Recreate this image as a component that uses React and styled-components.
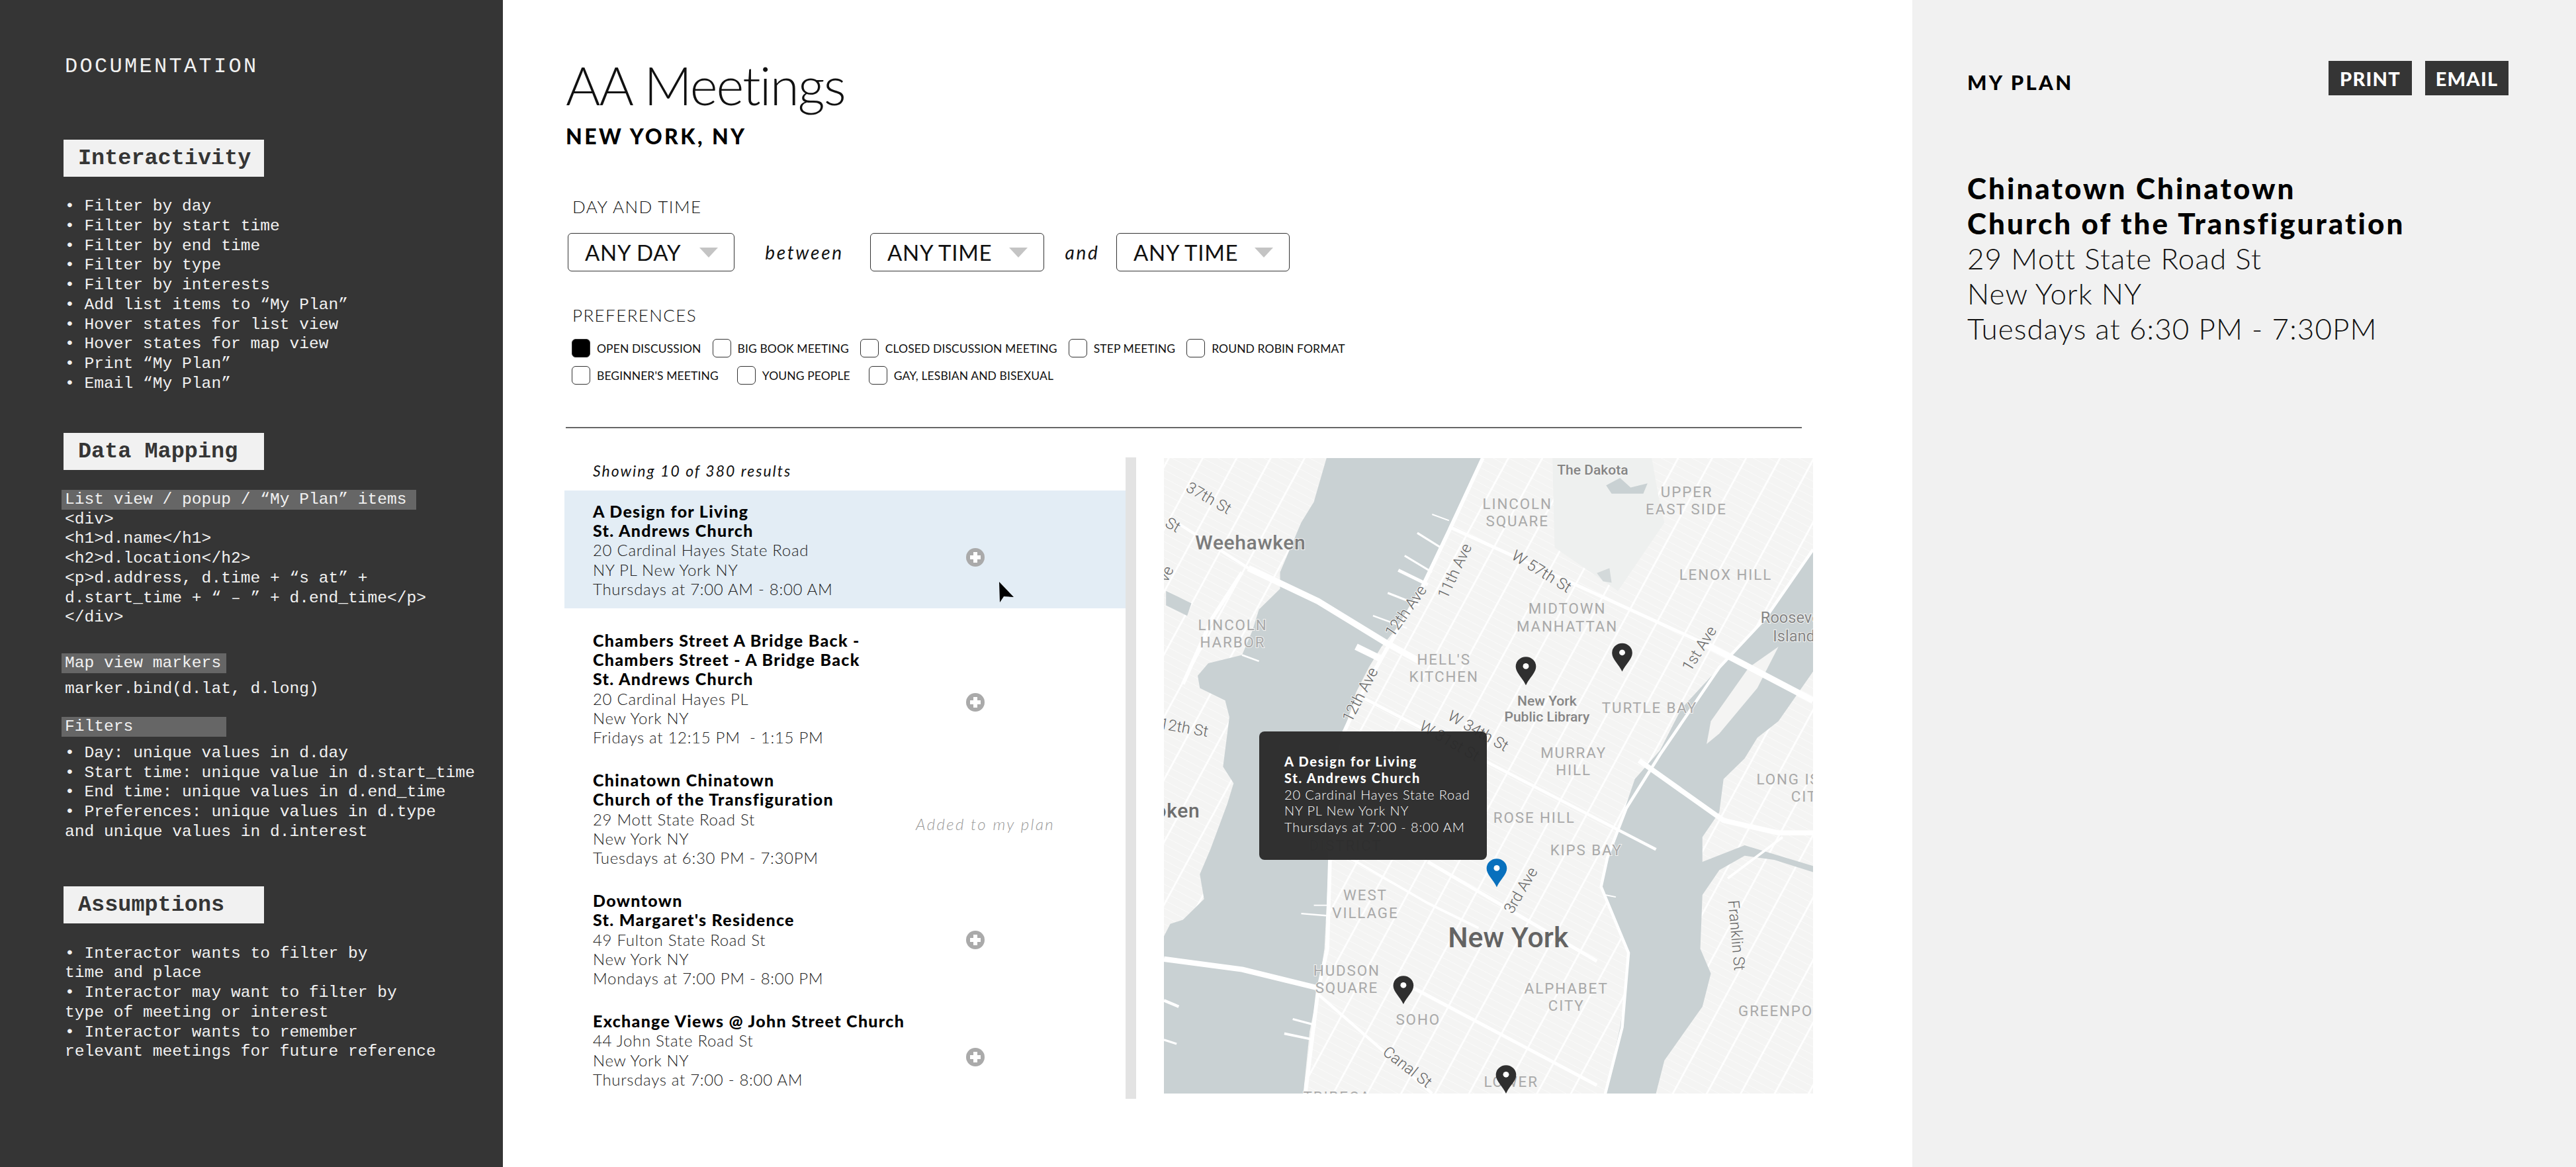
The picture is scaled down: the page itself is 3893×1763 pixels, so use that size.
import React from 'react';
import styled, { createGlobalStyle } from 'styled-components';

const INK = '#353535';
const PAPER = '#f1f1f1';
const MONO = '"Liberation Mono", "DejaVu Sans Mono", monospace';
const SANS = 'Lato, "Open Sans", sans-serif';
const MAP_FONT = 'Roboto, "Noto Sans", sans-serif';

const GlobalStyle = createGlobalStyle`
  html, body { margin: 0; padding: 0; background: #fff; }
  * { box-sizing: border-box; }
  body { font-family: ${SANS}; overflow: hidden; }
`;

const Page = styled.div`
  display: grid;
  grid-template-columns: 760px 2130px 1003px;
  width: 3893px;
  height: 1763px;
  overflow: hidden;
`;

/* ---------- documentation column ---------- */

const Docs = styled.aside`
  background: ${INK};
  color: ${PAPER};
  padding: 80px 0 0 96px;
  font-family: ${MONO};
`;

const DocsTitle = styled.div`
  height: 40px;
  line-height: 42px;
  padding-left: 2px;
  font-size: 32px;
  letter-spacing: 3.3px;
`;

const DocsHeading = styled.h2`
  width: 303px;
  height: 56px;
  margin: ${p => p.$top}px 0 0;
  padding-left: 22px;
  background: ${PAPER};
  color: ${INK};
  font-size: 33.5px;
  line-height: 56px;
  font-weight: 700;
`;

const Lines = styled.div`
  margin-top: ${p => p.$top}px;
  padding-left: 2px;
  font-size: 24.6px;
  line-height: 29.75px;
  white-space: pre;
`;

const CodeTag = styled.div`
  width: ${p => p.$width}px;
  height: 30px;
  margin: ${p => p.$top}px 0 0 -3px;
  padding-left: 5px;
  background: #666;
  font-size: 24.6px;
  line-height: 30px;
  white-space: pre;
`;

/* ---------- main column ---------- */

const Main = styled.main`
  padding: 88px 0 0 95px;
`;

const Title = styled.h1`
  margin: 0;
  font-size: 80px;
  line-height: 80px;
  font-weight: 300;
  color: #111;
  letter-spacing: -1.9px;
`;

const City = styled.div`
  margin-top: 18px;
  font-size: 32px;
  line-height: 40px;
  font-weight: 900;
  color: #000;
  letter-spacing: 3.4px;
`;

const FilterLabel = styled.div`
  margin: ${p => p.$top}px 0 0 10px;
  font-size: 26px;
  line-height: 32px;
  font-weight: 300;
  color: #111;
  letter-spacing: 1.4px;
`;

const SelectRow = styled.div`
  display: flex;
  align-items: center;
  margin: 24px 0 0 3px;
`;

const Select = styled.div`
  display: flex;
  align-items: center;
  justify-content: space-between;
  width: ${p => p.$width}px;
  height: 58px;
  padding: 0 24px 0 25px;
  border: 1.5px solid #333;
  border-radius: 6px;
  font-size: 33px;
  color: #111;
  letter-spacing: 0.7px;
`;

const Caret = styled.span`
  width: 0;
  height: 0;
  border-left: 14px solid transparent;
  border-right: 14px solid transparent;
  border-top: 15px solid #c4c4c4;
`;

const Joiner = styled.span`
  width: ${p => p.$width}px;
  padding-left: 6px;
  text-align: center;
  font-size: 28px;
  font-style: italic;
  color: #111;
  letter-spacing: 2.7px;
`;

const PrefRow = styled.div`
  display: flex;
  align-items: center;
  gap: ${p => p.$gap}px;
  margin: ${p => p.$top}px 0 0 9px;
`;

const Pref = styled.label`
  display: flex;
  align-items: center;
  gap: 10px;
  font-size: 17.5px;
  letter-spacing: 0.1px;
  color: #111;
`;

const Box = styled.span`
  width: 28px;
  height: 28px;
  border: 1.5px solid #333;
  border-radius: 6px;
  background: ${p => (p.$on ? '#000' : 'transparent')};
`;

const Rule = styled.hr`
  width: 1868px;
  height: 2px;
  margin: 64px 0 0;
  border: 0;
  background: #666;
`;

const Results = styled.section`
  display: flex;
  align-items: flex-start;
  margin: 44px 0 0 -2px;
`;

const ListColumn = styled.div`
  width: 848px;
`;

const Track = styled.div`
  width: 16px;
  height: 969px;
  background: #e3e3e3;
`;

const Count = styled.div`
  height: 50px;
  padding-left: 43px;
  font-size: 23px;
  line-height: 40px;
  font-style: italic;
  color: #111;
  letter-spacing: 2px;
`;

const Row = styled.article`
  position: relative;
  display: grid;
  grid-template-columns: 488px 1fr;
  padding: ${p => (p.$hot ? '17px 0 15px 43px' : '18px 0 18px 43px')};
  margin-bottom: ${p => (p.$hot ? 16 : 0)}px;
  background: ${p => (p.$hot ? '#e3edf5' : 'transparent')};
`;

const RowName = styled.div`
  font-size: 25px;
  line-height: 29.2px;
  font-weight: 900;
  color: #000;
  letter-spacing: 1.3px;
`;

const RowText = styled.div`
  font-size: 24px;
  line-height: 29.2px;
  font-weight: 300;
  color: #222;
  white-space: pre;
  letter-spacing: 0.7px;
`;

const AddButton = styled.button`
  width: 28px;
  height: 28px;
  margin: ${p => p.$top}px 0 0 76px;
  padding: 0;
  border: 0;
  border-radius: 50%;
  background: #aaa;
  display: flex;
  align-items: center;
  justify-content: center;
`;

const AddedNote = styled.div`
  margin-top: ${p => p.$top}px;
  font-size: 24px;
  line-height: 29px;
  font-weight: 300;
  font-style: italic;
  color: #999;
  letter-spacing: 2.4px;
`;

const Cursor = styled.svg`
  position: absolute;
  left: 657px;
  top: 138px;
`;

const MapBox = styled.div`
  position: relative;
  width: 981px;
  height: 960px;
  margin: 1px 0 0 42px;
  overflow: hidden;
  background: #f4f4f3;
`;

const MapSvg = styled.svg`
  display: block;
  width: 100%;
  height: 100%;
`;

const MapText = styled.text`
  font-family: ${MAP_FONT};
  font-size: ${p => p.$size}px;
  font-weight: ${p => p.$weight || 400};
  fill: ${p => p.$fill || '#a9a9a9'};
  letter-spacing: ${p => p.$spacing || 0}px;
  stroke: #f4f4f3;
  stroke-width: 3px;
  paint-order: stroke;
  text-anchor: ${p => p.$anchor || 'middle'};
  dominant-baseline: middle;
`;

const Popup = styled.div`
  position: absolute;
  left: 144px;
  top: 413px;
  width: 344px;
  height: 194px;
  padding: 33px 0 0 38px;
  border-radius: 8px;
  background: rgba(42, 42, 42, 0.97);
  color: #fff;
  font-size: 20px;
  line-height: 24.8px;
`;

const PopupName = styled.div`
  font-weight: 900;
  letter-spacing: 1.7px;
`;

const PopupText = styled.div`
  font-weight: 300;
  letter-spacing: 0.9px;
`;

/* ---------- plan column ---------- */

const Plan = styled.aside`
  background: ${PAPER};
  padding: 92px 102px 0 83px;
`;

const PlanHead = styled.div`
  display: flex;
  justify-content: space-between;
  align-items: flex-start;
  height: 52px;
`;

const PlanTitle = styled.div`
  margin-top: 14px;
  font-size: 31px;
  line-height: 36px;
  font-weight: 900;
  color: #000;
  letter-spacing: 3.3px;
`;

const PlanActions = styled.div`
  display: flex;
  gap: 20px;
`;

const PlanButton = styled.button`
  width: 126px;
  height: 52px;
  padding: 0;
  border: 0;
  background: ${INK};
  color: #fff;
  font-family: ${SANS};
  font-size: 29px;
  font-weight: 900;
  letter-spacing: 1.2px;
`;

const PlanItem = styled.div`
  margin-top: 114px;
`;

const PlanName = styled.div`
  font-size: 44px;
  line-height: 53px;
  font-weight: 900;
  color: #000;
  letter-spacing: 3px;
`;

const PlanText = styled.div`
  font-size: 44px;
  line-height: 53px;
  font-weight: 300;
  color: #111;
  letter-spacing: 1.1px;
`;

/* ---------- data ---------- */

const interactivity = [
  '• Filter by day', '• Filter by start time', '• Filter by end time', '• Filter by type',
  '• Filter by interests', '• Add list items to “My Plan”', '• Hover states for list view',
  '• Hover states for map view', '• Print “My Plan”', '• Email “My Plan”',
];

const markup = [
  '<div>', '<h1>d.name</h1>', '<h2>d.location</h2>', '<p>d.address, d.time + “s at” +',
  'd.start_time + “ – ” + d.end_time</p>', '</div>',
];

const filters = [
  '• Day: unique values in d.day', '• Start time: unique value in d.start_time',
  '• End time: unique values in d.end_time', '• Preferences: unique values in d.type',
  'and unique values in d.interest',
];

const assumptions = [
  '• Interactor wants to filter by', 'time and place', '• Interactor may want to filter by',
  'type of meeting or interest', '• Interactor wants to remember', 'relevant meetings for future reference',
];

const prefsTop = [
  ['OPEN DISCUSSION', true], ['BIG BOOK MEETING'], ['CLOSED DISCUSSION MEETING'], ['STEP MEETING'], ['ROUND ROBIN FORMAT'],
];
const prefsBottom = [["BEGINNER'S MEETING"], ['YOUNG PEOPLE'], ['GAY, LESBIAN AND BISEXUAL']];

const meetings = [
  { name: ['A Design for Living', 'St. Andrews Church'], text: ['20 Cardinal Hayes State Road', 'NY PL New York NY', 'Thursdays at 7:00 AM - 8:00 AM'], hot: true, addTop: 70 },
  { name: ['Chambers Street A Bridge Back -', 'Chambers Street - A Bridge Back', 'St. Andrews Church'], text: ['20 Cardinal Hayes PL', 'New York NY', 'Fridays at 12:15 PM  - 1:15 PM'], addTop: 94 },
  { name: ['Chinatown Chinatown', 'Church of the Transfiguration'], text: ['29 Mott State Road St', 'New York NY', 'Tuesdays at 6:30 PM - 7:30PM'], added: true, addTop: 66 },
  { name: ['Downtown', "St. Margaret's Residence"], text: ['49 Fulton State Road St', 'New York NY', 'Mondays at 7:00 PM - 8:00 PM'], addTop: 60 },
  { name: ['Exchange Views @ John Street Church'], text: ['44 John State Road St', 'New York NY', 'Thursdays at 7:00 - 8:00 AM'], addTop: 55 },
];

// map artwork is traced in a 1537 x 1536 space
const areaLabels = [
  ['UPPER', 1253, 99], ['EAST SIDE', 1252, 141], ['LINCOLN', 852, 128], ['SQUARE', 852, 170],
  ['LENOX HILL', 1345, 299], ['MIDTOWN', 970, 381], ['MANHATTAN', 970, 424], ['LINCOLN', 178, 421],
  ['HARBOR', 178, 463], ["HELL'S", 678, 504], ['KITCHEN', 678, 546], ['TURTLE BAY', 1165, 620],
  ['MURRAY', 985, 729], ['HILL', 985, 771], ['ROSE HILL', 892, 887], ['KIPS BAY', 1015, 964],
  ['DISTRICT', 445, 953], ['WEST', 492, 1074], ['VILLAGE', 492, 1116], ['HUDSON', 448, 1256],
  ['SQUARE', 448, 1298], ['SOHO', 617, 1374], ['ALPHABET', 968, 1299], ['CITY', 968, 1340],
  ['LOWER', 837, 1525], ['TRIBECA', 425, 1562],
];

const streetLabels = [
  ['37th St', 120, 113, 30], ['St', 35, 178, 30], ['ve', 22, 295, -65], ['12th St', 62, 668, 10],
  ['12th Ave', 590, 385, -55], ['11th Ave', 706, 288, -65], ['W 57th St', 908, 290, 32],
  ['1st Ave', 1285, 476, -58], ['12th Ave', 482, 587, -63], ['W 34th St', 758, 676, 30],
  ['W 31st St', 690, 700, 30], ['3rd Ave', 862, 1060, -60], ['Franklin St', 1368, 1168, 85],
  ['Canal St', 590, 1488, 38],
];

const pins = [[872, 563], [1100, 530], [582, 1334], [825, 1550]];

const majorRoads = [
  ['M215 280 L380 360 L540 460 L620 505', 15],
  ['M770 14 L690 190 L620 340 L540 480 L480 590 L440 680 L412 850 L402 1200 L380 1300 L350 1550', 9],
  ['M15 1225 L200 1250 L380 1295', 13],
  ['M1290 460 L1552 600', 15],
  ['M1140 745 L1340 890 L1470 920 L1552 920', 12],
  ['M1552 235 L1440 400 L1330 520 L1190 730 L1110 860 L1065 980 L1050 1050 L1115 1210 L1100 1390 L1060 1550', 7],
  ['M690 180 L1290 460', 8],
  ['M480 590 L1180 960', 7],
  ['M30 160 L215 280', 7],
  ['M200 290 L130 400 L60 560', 9],
  ['M640 990 L1040 1230', 8],
  ['M560 1270 L1040 1530', 8],
  ['M380 1310 L650 1550', 7],
  ['M420 960 L640 1090 L760 1150', 6],
  ['M1350 1030 L1480 930', 6],
];

const piers = [
  ['M650 150 L690 165', 3], ['M615 195 L670 230', 5], ['M585 250 L650 290', 5], ['M570 285 L640 320', 8],
  ['M545 340 L620 370', 5], ['M510 395 L590 425', 4], ['M470 470 L530 500', 16], ['M200 490 L240 505', 4],
  ['M340 1115 L400 1120', 4], ['M370 1095 L405 1095', 3], ['M15 1325 L50 1340', 7], ['M15 1420 L45 1430', 5],
  ['M300 1405 L370 1420', 6], ['M320 1370 L375 1385', 5], ['M1060 1070 L1085 1075', 3],
];

const range = (from, to, step) => {
  const out = [];
  for (let v = from; v <= to; v += step) out.push(v);
  return out;
};

const Pin = ({ x, y, color }) => (
  <g transform={`translate(${x} ${y})`}>
    <path d="M0 0C-8-18-24-30-24-45A24 23.5 0 1 1 24-45C24-30 8-18 0 0Z" fill={color} />
    <circle cy="-46" r="7" fill="#fff" />
  </g>
);

const CityMap = () => (
  <MapSvg viewBox="15 14 1537 1536" preserveAspectRatio="none">
    <rect x="15" y="14" width="1537" height="1536" fill="#f4f4f3" />
    <g transform="rotate(28 780 780)" stroke="#fff" fill="none">
      {range(-600, 2200, 17).map(y => (
        <line key={y} x1="-700" x2="2300" y1={y} y2={y} strokeWidth="1.4" strokeOpacity="0.55" />
      ))}
      {range(-600, 2200, 71).map(x => (
        <line key={x} x1={x} x2={x} y1="-700" y2="2300" strokeWidth="4.5" strokeOpacity="0.9" />
      ))}
    </g>
    <path d="M935 14L1170 14L1190 130L1200 170L1090 335L940 230Z" fill="#eef0ef" />
    <path d="M1062 80L1095 62L1120 85L1160 75L1150 100L1110 100L1075 100Z" fill="#c9d1d3" />
    <path d="M1040 292L1070 280L1075 315L1055 312Z" fill="#d3d9da" />
    <path
      d="M400 14L770 14L700 170L640 300L570 420L530 470L500 520L470 580L440 680L415 850L405 1000L395 1200L380 1300L360 1400L345 1550L15 1550L15 1170L30 1140L60 1130L110 1080L100 1020L125 960L165 850L180 800L155 760L170 640L160 600L100 570L95 540L120 510L200 490L225 430L240 380L290 330L290 290L340 170L370 120Z"
      fill="#c9d1d3"
    />
    <path
      d="M1552 240L1440 400L1330 520L1240 620L1190 720L1130 790L1100 880L1070 970L1050 1050L1080 1130L1115 1210L1110 1290L1095 1390L1060 1550L1180 1550L1200 1470L1290 1340L1310 1260L1285 1200L1290 1070L1330 1010L1390 975L1460 985L1552 1015L1552 1000L1390 950L1290 990L1290 930L1330 870L1340 790L1390 740L1420 690L1470 650L1552 530Z"
      fill="#c9d1d3"
    />
    <path d="M20 335L80 365L70 395L20 370Z" fill="#c9d1d3" />
    <path d="M1300 705L1310 650L1400 520L1470 470L1420 570L1330 680Z" fill="#f4f4f3" />
    <g fill="none" stroke="#fff" strokeLinecap="butt" strokeLinejoin="round">
      {[...majorRoads, ...piers].map(([d, w]) => (
        <path key={d} d={d} strokeWidth={w} />
      ))}
    </g>
    {areaLabels.map(([t, x, y]) => (
      <MapText key={`${t}${x}`} x={x} y={y} $size={35} $spacing={3}>{t}</MapText>
    ))}
    <MapText x={1418} y={794} $size={35} $spacing={3} $anchor="start">LONG ISLAND</MapText>
    <MapText x={1500} y={835} $size={35} $spacing={3} $anchor="start">CITY</MapText>
    <MapText x={1375} y={1353} $size={35} $spacing={3} $anchor="start">GREENPOINT</MapText>
    {streetLabels.map(([t, x, y, r]) => (
      <MapText key={`${t}${x}`} x={x} y={y} $size={37} $weight={300} $fill="#666" transform={`rotate(${r} ${x} ${y})`}>{t}</MapText>
    ))}
    <MapText x={1030} y={46} $size={33} $weight={500} $fill="#858585">The Dakota</MapText>
    <MapText x={922} y={604} $size={33} $weight={500} $fill="#858585">New York</MapText>
    <MapText x={922} y={642} $size={33} $weight={500} $fill="#858585">Public Library</MapText>
    <MapText x={220} y={222} $size={47} $weight={500} $spacing={1} $fill="#7b7b7b">Weehawken</MapText>
    <MapText x={100} y={870} $size={47} $weight={500} $spacing={1} $fill="#6d6d6d" $anchor="end">Hoboken</MapText>
    <MapText x={1428} y={402} $size={37} $fill="#858585" $anchor="start">Roosevelt</MapText>
    <MapText x={1457} y={448} $size={37} $fill="#858585" $anchor="start">Island</MapText>
    <MapText x={830} y={1178} $size={67} $weight={500} $fill="#636363">New York</MapText>
    {pins.map(([x, y]) => (
      <Pin key={x} x={x} y={y} color="#2f2f2f" />
    ))}
    <Pin x={803} y={1051} color="#0870bd" />
  </MapSvg>
);

const App = () => (
  <Page>
    <GlobalStyle />
    <Docs>
      <DocsTitle>DOCUMENTATION</DocsTitle>
      <DocsHeading $top={91}>Interactivity</DocsHeading>
      <Lines $top={30}>{interactivity.map(l => <div key={l}>{l}</div>)}</Lines>
      <DocsHeading $top={59}>Data Mapping</DocsHeading>
      <CodeTag $top={30} $width={536}>List view / popup / “My Plan” items</CodeTag>
      <Lines $top={0}>{markup.map(l => <div key={l}>{l}</div>)}</Lines>
      <CodeTag $top={39} $width={249}>Map view markers</CodeTag>
      <Lines $top={9}><div>marker.bind(d.lat, d.long)</div></Lines>
      <CodeTag $top={27} $width={249}>Filters</CodeTag>
      <Lines $top={10}>{filters.map(l => <div key={l}>{l}</div>)}</Lines>
      <DocsHeading $top={67}>Assumptions</DocsHeading>
      <Lines $top={31}>{assumptions.map(l => <div key={l}>{l}</div>)}</Lines>
    </Docs>

    <Main>
      <Title>AA Meetings</Title>
      <City>NEW YORK, NY</City>
      <FilterLabel $top={70}>DAY AND TIME</FilterLabel>
      <SelectRow>
        <Select $width={252}>ANY DAY<Caret /></Select>
        <Joiner $width={205}>between</Joiner>
        <Select $width={263}>ANY TIME<Caret /></Select>
        <Joiner $width={109}>and</Joiner>
        <Select $width={262}>ANY TIME<Caret /></Select>
      </SelectRow>
      <FilterLabel $top={50}>PREFERENCES</FilterLabel>
      <PrefRow $gap={17} $top={20}>
        {prefsTop.map(([t, on]) => <Pref key={t}><Box $on={on} />{t}</Pref>)}
      </PrefRow>
      <PrefRow $gap={28} $top={13}>
        {prefsBottom.map(([t]) => <Pref key={t}><Box />{t}</Pref>)}
      </PrefRow>
      <Rule />
      <Results>
        <ListColumn>
          <Count>Showing 10 of 380 results</Count>
          {meetings.map(m => (
            <Row key={m.name[0]} $hot={m.hot}>
              <div>
                <RowName>{m.name.map(l => <div key={l}>{l}</div>)}</RowName>
                <RowText>{m.text.map(l => <div key={l}>{l}</div>)}</RowText>
              </div>
              {m.added ? (
                <AddedNote $top={m.addTop}>Added to my plan</AddedNote>
              ) : (
                <AddButton $top={m.addTop} aria-label="Add to my plan">
                  <svg width="16" height="16" viewBox="0 0 16 16"><path d="M5 0h6v5h5v6h-5v5H5v-5H0V5h5z" fill="#fff" /></svg>
                </AddButton>
              )}
              {m.hot && (
                <Cursor width="23" height="32" viewBox="0 0 23 32">
                  <path d="M0 0L22 23L7 22L1 31Z" fill="#000" />
                </Cursor>
              )}
            </Row>
          ))}
        </ListColumn>
        <Track />
        <MapBox>
          <CityMap />
          <Popup>
            <PopupName>A Design for Living</PopupName>
            <PopupName>St. Andrews Church</PopupName>
            <PopupText>20 Cardinal Hayes State Road</PopupText>
            <PopupText>NY PL New York NY</PopupText>
            <PopupText>Thursdays at 7:00 - 8:00 AM</PopupText>
          </Popup>
        </MapBox>
      </Results>
    </Main>

    <Plan>
      <PlanHead>
        <PlanTitle>MY PLAN</PlanTitle>
        <PlanActions>
          <PlanButton>PRINT</PlanButton>
          <PlanButton>EMAIL</PlanButton>
        </PlanActions>
      </PlanHead>
      <PlanItem>
        <PlanName>Chinatown Chinatown</PlanName>
        <PlanName>Church of the Transfiguration</PlanName>
        <PlanText>29 Mott State Road St</PlanText>
        <PlanText>New York NY</PlanText>
        <PlanText>Tuesdays at 6:30 PM - 7:30PM</PlanText>
      </PlanItem>
    </Plan>
  </Page>
);

export default App;
